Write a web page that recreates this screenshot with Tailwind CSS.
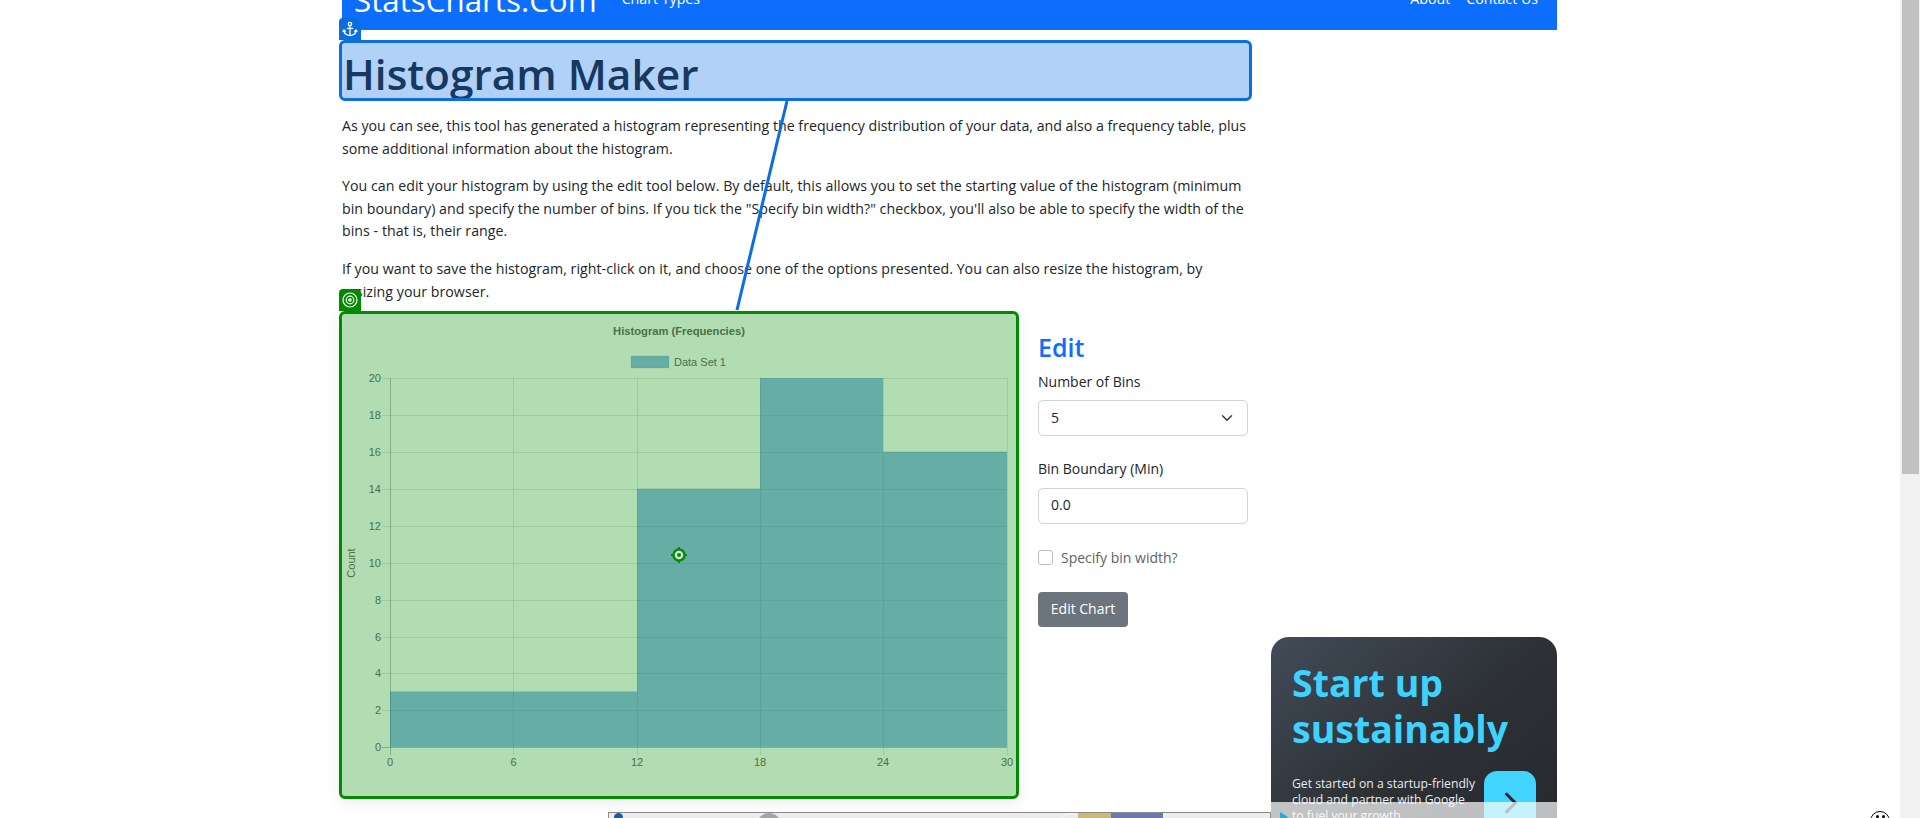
<!DOCTYPE html>
<html lang="en">
<head>
  <meta charset="UTF-8">
  <title>Histogram Maker</title>
  <script src="https://cdn.jsdelivr.net/npm/@tailwindcss/browser@4"></script>
</head>
<body class="relative h-[818px] w-[1920px] overflow-hidden bg-white font-['Open_Sans',sans-serif] text-[14.2px] leading-[22.5px] text-[#212529]">
  <div class="ml-[342px] w-[1215px]">
    <!-- navbar, scrolled partly off the top -->
    <nav class="flex h-[30px] items-start overflow-hidden bg-[#0d6efd] pl-[12px] pr-[19px] text-white">
      <a class="-mt-[23px] text-[31.300px] leading-[46px]">StatsCharts.Com</a>
      <a class="-mt-[12px] ml-[25px] text-[14.200px] leading-[22px]">Chart Types</a>
      <div class="-mt-[12px] ml-auto flex gap-[16px] text-[14.200px] leading-[22px]">
        <a>About</a>
        <a>Contact Us</a>
      </div>
    </nav>

    <div class="flex">
      <main class="w-[929px]">
        <div class="relative -ml-[3px] mt-[10px] w-[913px]">
          <h1 class="h-[61px] pl-[4px] pt-[7px] text-[42.400px] leading-[54px] font-semibold">Histogram Maker</h1>
          <div class="absolute inset-0 rounded-[6px] border-[3px] border-[#0a6ee0] bg-[#0066e0]/30"></div>
          <div class="absolute -top-[22px] left-0 flex h-[22px] w-[22px] items-center justify-center rounded-t-[4px] bg-[#0a6ee0]">
            <svg class="h-[16px] w-[16px]" viewBox="0 0 24 24" fill="none" stroke="#fff" stroke-width="2" stroke-linecap="round">
              <circle cx="12" cy="4.5" r="2.5"/>
              <path d="M12 7v15M8 11h8M3 14c0 5 4 7.500 9 8 5-.5 9-3 9-8M1.500 15.500 3 13.500l2 2M19 15.500l2-2 1.500 2"/>
            </svg>
          </div>
        </div>

        <div class="mt-[14px] w-[912px]">
          <p>As you can see, this tool has generated a histogram representing the frequency distribution of your data, and also a frequency table, plus<br>some additional information about the histogram.</p>
          <p class="mt-[15px] tracking-[0.035px]">You can edit your histogram by using the edit tool below. By default, this allows you to set the starting value of the histogram (minimum<br>bin boundary) and specify the number of bins. If you tick the "Specify bin width?" checkbox, you'll also be able to specify the width of the<br>bins - that is, their range.</p>
          <p class="mt-[14px] leading-[23px] tracking-[0.035px]">If you want to save the histogram, right-click on it, and choose one of the options presented. You can also resize the histogram, by<br>resizing your browser.</p>
        </div>

        <div class="mt-[8px] flex">
          <!-- chart with annotation overlay -->
          <div class="relative -ml-[3px] h-[488px] w-[680px] rounded-[6px] shadow-[0_4px_16px_rgba(0,0,0,0.08)]">
            <svg class="block h-[488px] w-[680px]" viewBox="339 311 680 488" font-family="'Liberation Sans',sans-serif" font-size="11" fill="#666">
              <text x="679" y="335" text-anchor="middle" font-weight="700" font-size="11.200">Histogram (Frequencies)</text>
              <rect x="631" y="356" width="38" height="12" fill="#2179db" fill-opacity="0.5" stroke="#2179db" stroke-opacity="0.1"/>
              <text x="674" y="365.500">Data Set 1</text>

              <g stroke="#000" stroke-opacity="0.1" stroke-width="1">
                <path d="M382 378.500H1007M382 415.500H1007M382 452.500H1007M382 489.500H1007M382 526.500H1007M382 563.500H1007M382 600.500H1007M382 637.500H1007M382 673.500H1007M382 710.500H1007"/>
                <path d="M513.500 378V755M637.500 378V755M760.500 378V755M883.500 378V755M1007.500 378V755"/>
              </g>
              <path d="M382 747.500H1007M390.500 378V755" stroke="#000" stroke-opacity="0.25"/>

              <path d="M390 747V691.600H637V488.700H760V378H883V451.800H1007V747Z" fill="#2179db" fill-opacity="0.5"/>

              <g text-anchor="end">
                <text x="381" y="382">20</text>
                <text x="381" y="419">18</text>
                <text x="381" y="456">16</text>
                <text x="381" y="493">14</text>
                <text x="381" y="530">12</text>
                <text x="381" y="567">10</text>
                <text x="381" y="604">8</text>
                <text x="381" y="641">6</text>
                <text x="381" y="677">4</text>
                <text x="381" y="714">2</text>
                <text x="381" y="751">0</text>
              </g>
              <g text-anchor="middle">
                <text x="390" y="766">0</text>
                <text x="513.500" y="766">6</text>
                <text x="637" y="766">12</text>
                <text x="760" y="766">18</text>
                <text x="883" y="766">24</text>
                <text x="1007" y="766">30</text>
              </g>
              <text transform="translate(355 563) rotate(-90)" text-anchor="middle">Count</text>
            </svg>
            <div class="absolute inset-0 rounded-[6px] border-[3px] border-[#008a00] bg-[#008c00]/30"></div>
            <div class="absolute -top-[22px] left-0 flex h-[22px] w-[22px] items-center justify-center rounded-t-[4px] bg-[#008a00]">
              <svg class="h-[16px] w-[16px]" viewBox="0 0 16 16" fill="none" stroke="#fff" stroke-width="1.200">
                <circle cx="8" cy="8" r="7"/>
                <circle cx="8" cy="8" r="3.800"/>
                <circle cx="8" cy="8" r="1.200"/>
              </svg>
            </div>
          </div>

          <!-- edit form -->
          <form class="ml-[19px] w-[210px] text-[14px]">
            <h3 class="mt-[17px] text-[25px] leading-[38px] font-semibold text-[#0d6efd]">Edit</h3>
            <label class="mt-[5px] block">Number of Bins</label>
            <div class="mt-[7px] flex h-[36px] items-center justify-between rounded-[5px] border border-[#ced4da] pl-[12px] pr-[14px]">
              <span>5</span>
              <svg class="h-[12px] w-[12px]" viewBox="0 0 16 16" fill="none" stroke="#343a40" stroke-width="2" stroke-linecap="round" stroke-linejoin="round"><path d="m2 5 6 6 6-6"/></svg>
            </div>
            <label class="mt-[22px] block">Bin Boundary (Min)</label>
            <div class="mt-[7px] flex h-[36px] items-center rounded-[5px] border border-[#ced4da] pl-[12px]">0.0</div>
            <div class="mt-[23px] flex items-center gap-[8px] text-[#5c636a]">
              <span class="h-[15px] w-[15px] rounded-[3px] border border-[#b9bec4]"></span>
              <span>Specify bin width?</span>
            </div>
            <button type="button" class="mt-[23px] h-[35px] w-[90px] rounded-[4px] bg-[#6c757d] text-[14px] text-white">Edit Chart</button>
          </form>
        </div>
      </main>

      <!-- ad in the right column -->
      <aside class="w-[286px] pt-[607px]">
        <div class="h-[240px] rounded-[18px] bg-gradient-to-br from-[#414c58] via-[#2d3136] to-[#24272b] pl-[21px] pt-[23px]">
          <div class="text-[37.500px] leading-[46px] font-bold text-[#3fd2ff]">Start up<br>sustainably</div>
          <div class="mt-[18px] flex">
            <p class="w-[192px] pt-[6px] text-[12.200px] leading-[16px] text-[#e8eaed]">Get started on a startup-friendly<br>cloud and partner with Google<br>to fuel your growth</p>
            <span class="mt-[1px] flex h-[64px] w-[52px] items-center justify-center rounded-[13px] bg-[#40d4ff]">
              <svg class="h-[26px] w-[26px]" viewBox="0 0 24 24" fill="none" stroke="#24272b" stroke-width="2.800"><path d="m8 3 9 9-9 9"/></svg>
            </span>
          </div>
        </div>
      </aside>
    </div>
  </div>

  <!-- leader line between the annotations -->
  <svg class="pointer-events-none absolute left-0 top-0 h-[818px] w-[1920px]" viewBox="0 0 1920 818">
    <line x1="787" y1="101" x2="737" y2="310" stroke="#0a6ee0" stroke-width="3"/>
    <g fill="none" stroke="#078a07">
      <circle cx="679" cy="555" r="5.500" fill="#d6ecd8" stroke-width="2.500"/>
      <circle cx="679" cy="555" r="2" fill="#078a07" stroke="none"/>
      <path d="M679 547v2M679 561v2M671 555h2M685 555h2" stroke-width="2"/>
    </g>
  </svg>

  <!-- sticky bottom ad, cut off by the window -->
  <div class="absolute left-[608px] top-[812px] h-[10px] w-[663px] overflow-hidden border border-[#8a8a8a] bg-[#ececec]">
    <span class="absolute left-[5px] top-0 h-[10px] w-[9px] rounded-full bg-[#1d5f9e]"></span>
    <span class="absolute left-[148px] top-0 h-[30px] w-[24px] rounded-full bg-[#a5a5a9]"></span>
    <span class="absolute left-[449px] top-0 h-[30px] w-[26px] rounded-full border border-[#f8f8f8]"></span>
    <span class="absolute left-[469px] top-0 h-[10px] w-[33px] bg-[#cdb878]"></span>
    <span class="absolute left-[502px] top-0 h-[10px] w-[52px] bg-[#6b79b0]"></span>
  </div>
  <div class="absolute left-[1271px] top-[802px] h-[16px] w-[286px] bg-white/70">
    <svg class="absolute left-[8px] top-[10px] h-[10px] w-[10px]" viewBox="0 0 10 10"><path d="M1 0v10l8-5z" fill="#2aa7d8"/></svg>
  </div>

  <!-- floating smiley button -->
  <div class="absolute left-[1870px] top-[811px] flex h-[20px] w-[20px] justify-center gap-[3px] rounded-full border-[1.500px] border-black bg-white pt-[3px]">
    <span class="h-[3px] w-[3px] rounded-full bg-black"></span>
    <span class="h-[3px] w-[3px] rounded-full bg-black"></span>
  </div>

  <!-- page scrollbar -->
  <div class="absolute right-0 top-0 h-[818px] w-[20px] bg-[#f1f1f1] pl-[2px] pr-[1px]">
    <div class="h-[474px] bg-[#c1c1c1]"></div>
  </div>
</body>
</html>
